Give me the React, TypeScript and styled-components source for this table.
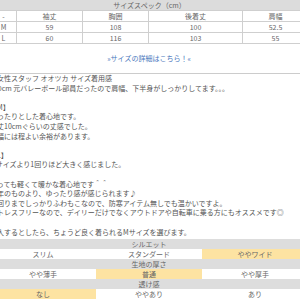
import React from "react";
import styled, { createGlobalStyle } from "styled-components";

const GlobalStyle = createGlobalStyle`
  html, body {
    margin: 0;
    padding: 0;
    background: #ffffff;
    overflow: hidden;
  }
`;

const Page = styled.div`
  width: 318px;
  margin-left: -10px;
  font-family: "Noto Sans CJK JP", "Noto Sans", sans-serif;
  font-size: 7px;
  color: #555555;
`;

const SpecTable = styled.table`
  width: 100%;
  border-collapse: collapse;
  table-layout: fixed;
`;

const SpecTitle = styled.th`
  height: 10px;
  padding: 0;
  background: #dcdcdc;
  font-weight: normal;
  line-height: 10px;
  text-align: center;
  color: #666666;
`;

const SpecCell = styled.td`
  height: 10px;
  padding: 0;
  border: 1px solid #cfcfcf;
  line-height: 9px;
  text-align: center;
  color: #666666;
`;

const LinkRow = styled.div`
  padding: 9px 0 10px;
  text-align: center;
  line-height: 10px;
`;

const DetailLink = styled.a`
  color: #4a78bd;
  text-decoration: none;
`;

const Divider = styled.hr`
  margin: 0;
  border: none;
  border-top: 1px solid #cccccc;
`;

const Review = styled.div`
  padding: 0 0 2px;
  line-height: 9.6px;
  white-space: nowrap;
`;

const Line = styled.div`
  height: 9.6px;
`;

const FeelTable = styled.table`
  width: 100%;
  border-collapse: collapse;
  table-layout: fixed;
`;

const FeelHead = styled.td`
  height: 10px;
  padding: 0;
  background: #dddddd;
  line-height: 10px;
  text-align: center;
  color: #666666;
`;

const FeelCell = styled.td<{ $active?: boolean }>`
  height: 10px;
  padding: 0;
  background: ${({ $active }) => ($active ? "#fde3a2" : "#ffffff")};
  line-height: 10px;
  text-align: center;
  color: #666666;
`;

const columns = [26, 66, 66, 94, 66];

const specRows = [
  ["-", "袖丈", "胸囲", "後着丈", "肩幅"],
  ["M", "59", "108", "100", "52.5"],
  ["L", "60", "116", "103", "55"],
];

const reviewLines = [
  "■女性スタッフ オオツカ サイズ着用感",
  "170cm 元バレーボール部員だったので肩幅、下半身がしっかりしてます。。。",
  "",
  "【M】",
  "ゆったりとした着心地です。",
  "着丈10cmぐらいの丈感でした。",
  "肩幅には程よい余裕があります。",
  "",
  "【L】",
  "Mサイズより1回りほど大きく感じました。",
  "",
  "とっても軽くて暖かな着心地です＾＾",
  "例年のものより、ゆったり感が感じられます♪",
  "首回りまでしっかりふわもこなので、防寒アイテム無しでも温かいですよ。",
  "ストレスフリーなので、デイリーだけでなくアウトドアや自転車に乗る方にもオススメです◎",
  "",
  "購入するとしたら、ちょうど良く着られるMサイズを選びます。",
];

const feelGroups = [
  { title: "シルエット", options: ["スリム", "スタンダード", "ややワイド"], active: 2 },
  { title: "生地の厚さ", options: ["やや薄手", "普通", "やや厚手"], active: 1 },
  { title: "透け感", options: ["なし", "ややあり", "あり"], active: 0 },
];

const App: React.FunctionComponent = () => (
  <Page>
    <GlobalStyle />
    <SpecTable>
      <colgroup>
        {columns.map((width, index) => (
          <col key={index} style={{ width }} />
        ))}
      </colgroup>
      <thead>
        <tr>
          <SpecTitle colSpan={5}>サイズスペック（cm）</SpecTitle>
        </tr>
      </thead>
      <tbody>
        {specRows.map((row) => (
          <tr key={row[0]}>
            {row.map((value, index) => (
              <SpecCell key={index}>{value}</SpecCell>
            ))}
          </tr>
        ))}
      </tbody>
    </SpecTable>

    <LinkRow>
      <DetailLink href="#">»サイズの詳細はこちら！«</DetailLink>
    </LinkRow>
    <Divider />

    <Review>
      {reviewLines.map((text, index) => (
        <Line key={index}>{text}</Line>
      ))}
    </Review>

    <FeelTable>
      <tbody>
        {feelGroups.map((group) => (
          <React.Fragment key={group.title}>
            <tr>
              <FeelHead colSpan={3}>{group.title}</FeelHead>
            </tr>
            <tr>
              {group.options.map((option, index) => (
                <FeelCell key={option} $active={index === group.active}>
                  {option}
                </FeelCell>
              ))}
            </tr>
          </React.Fragment>
        ))}
      </tbody>
    </FeelTable>
  </Page>
);

export default App;
